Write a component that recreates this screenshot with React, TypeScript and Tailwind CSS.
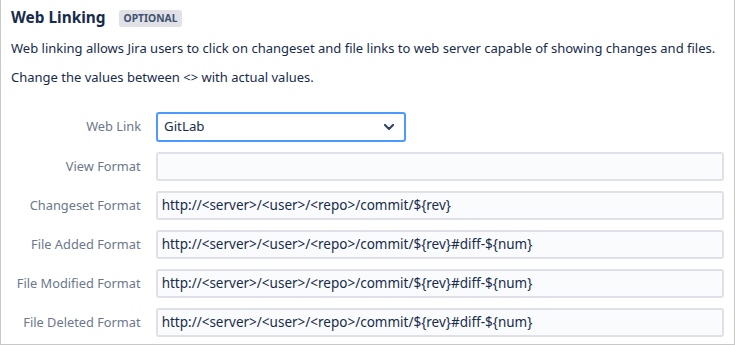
import React from 'react';

const font = { fontFamily: '"Segoe UI", "Noto Sans", "Open Sans", sans-serif' };

const rows = [
  { label: 'View Format', value: '' },
  { label: 'Changeset Format', value: 'http://<server>/<user>/<repo>/commit/${rev}' },
  { label: 'File Added Format', value: 'http://<server>/<user>/<repo>/commit/${rev}#diff-${num}' },
  { label: 'File Modified Format', value: 'http://<server>/<user>/<repo>/commit/${rev}#diff-${num}' },
  { label: 'File Deleted Format', value: 'http://<server>/<user>/<repo>/commit/${rev}#diff-${num}' },
];

export default function App() {
  return (
    <div className="w-[736px] h-[345px] bg-white overflow-hidden" style={font}>
      <div className="w-[735px] h-[345px] border-l border-r border-b border-[#c8c8c8] pl-[10px] pr-[10px] pt-[7px]">
        <div className="flex items-center gap-[13px] h-[22px]">
          <h3 className="text-[15.4px] font-bold text-[#172b4d]">Web Linking</h3>
          <span className="bg-[#dfe1e6] text-[#42526e] text-[10.3px] font-bold rounded-[3px] px-[5px] h-[17px] leading-[17px]">
            OPTIONAL
          </span>
        </div>
        <p className="mt-[9px] text-[13px] leading-[20px] text-[#172b4d] whitespace-nowrap">
          Web linking allows Jira users to click on changeset and file links to web server capable of showing changes and files.
        </p>
        <p className="mt-[9px] text-[13px] leading-[20px] text-[#172b4d] whitespace-nowrap">
          Change the values between &lt;&gt; with actual values.
        </p>

        <div className="mt-[25px] flex flex-col gap-[10px]">
          <div className="flex items-center">
            <label className="w-[130px] text-right text-[12.8px] text-[#6b778c] whitespace-nowrap">Web Link</label>
            <div className="ml-[15px] w-[250px] h-[30px] border-2 border-[#4c9aff] rounded-[3px] bg-white flex items-center justify-between pl-[6px] pr-[9px]">
              <span className="text-[13.3px] text-[#172b4d]">GitLab</span>
              <svg width="12" height="8" viewBox="0 0 12 8">
                <path d="M2 2l4 4 4-4" fill="none" stroke="#344563" strokeWidth="2.2" strokeLinecap="round" strokeLinejoin="round" />
              </svg>
            </div>
          </div>
          {rows.map((r) => (
            <div key={r.label} className="flex items-center">
              <label className="w-[130px] text-right text-[12.8px] text-[#6b778c] whitespace-nowrap">{r.label}</label>
              <div className="ml-[15px] w-[570px] h-[29px] border-2 border-[#dfe1e6] rounded-[3px] bg-[#fafbfc] flex items-center pl-[4px]">
                <span className="text-[13.5px] text-[#172b4d] whitespace-nowrap">{r.value}</span>
              </div>
            </div>
          ))}
        </div>
      </div>
    </div>
  );
}
